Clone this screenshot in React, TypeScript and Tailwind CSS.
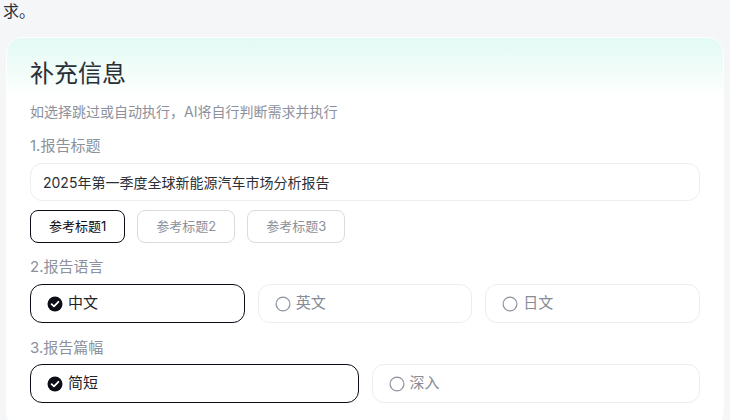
import { useState } from 'react'

const FONT = "font-['Inter','Noto_Sans_CJK_SC',sans-serif]"

const titleOptions = ['参考标题1', '参考标题2', '参考标题3']
const langOptions = ['中文', '英文', '日文']
const lengthOptions = ['简短', '深入']

function CheckIcon({ checked }: { checked: boolean }) {
  if (checked) {
    return (
      <svg width="16" height="16" viewBox="0 0 16 16" className="shrink-0">
        <circle cx="8" cy="8" r="7.5" fill="#0b0d17" />
        <path d="M4.6 8.2 L7 10.4 L11.4 5.8" fill="none" stroke="#fff" strokeWidth="1.8" strokeLinecap="round" strokeLinejoin="round" />
      </svg>
    )
  }
  return (
    <svg width="16" height="16" viewBox="0 0 16 16" className="shrink-0">
      <circle cx="8" cy="8" r="6.9" fill="none" stroke="#8d929e" strokeWidth="1.2" />
    </svg>
  )
}

function OptionRow({ items, value, onChange }: { items: string[]; value: string; onChange: (v: string) => void }) {
  return (
    <div className="flex gap-[13px]">
      {items.map((item) => {
        const active = item === value
        return (
          <button
            key={item}
            onClick={() => onChange(item)}
            className={`flex-1 h-[39px] flex items-center gap-[5px] pl-[16px] rounded-[12px] border text-[15px] ${
              active ? 'border-[#0b0d17] text-[#1f2329]' : 'border-[#ebedf0] text-[#868b96]'
            }`}
          >
            <CheckIcon checked={active} />
            {item}
          </button>
        )
      })}
    </div>
  )
}

export default function App() {
  const [title, setTitle] = useState('参考标题1')
  const [lang, setLang] = useState('中文')
  const [len, setLen] = useState('简短')

  return (
    <div className={`min-h-[420px] bg-[#f5f6f8] ${FONT}`}>
      {/* tail of the previous message */}
      <div className="pl-[3px] text-[16px] leading-[22px] text-[#2b2f36]">求。</div>

      <div className="mt-[15px] ml-[6px] mr-[6px] rounded-[16px] border border-white bg-[linear-gradient(180deg,#e3faf4_0px,#f3fdfa_36px,#ffffff_58px)] px-[23px] pt-[20px] pb-6">
        <h2 className="text-[24px] leading-[32px] text-[#2b2f36]">补充信息</h2>
        <p className="mt-[12px] text-[14px] leading-[20px] text-[#8c919c]">如选择跳过或自动执行，AI将自行判断需求并执行</p>

        {/* 1. title */}
        <div className="mt-[14px] text-[15px] leading-[20px] text-[#8c919c]">1.报告标题</div>
        <div className="mt-[7px] h-[38px] flex items-center px-[12px] rounded-[12px] border border-[#ebedf0] text-[14px] text-[#2b2f36]">
          2025年第一季度全球新能源汽车市场分析报告
        </div>
        <div className="mt-[9px] flex gap-[12px]">
          {titleOptions.map((t) => (
            <button
              key={t}
              onClick={() => setTitle(t)}
              className={`h-[33px] px-[18px] rounded-[8px] border text-[13px] ${
                title === t ? 'border-[#0b0d17] text-[#0b0d17]' : 'border-[#d9dbe0] text-[#8c919c]'
              }`}
            >
              {t}
            </button>
          ))}
        </div>

        {/* 2. language */}
        <div className="mt-[14px] text-[15px] leading-[20px] text-[#8c919c]">2.报告语言</div>
        <div className="mt-[7px]">
          <OptionRow items={langOptions} value={lang} onChange={setLang} />
        </div>

        {/* 3. length */}
        <div className="mt-[15px] text-[15px] leading-[20px] text-[#8c919c]">3.报告篇幅</div>
        <div className="mt-[6px]">
          <OptionRow items={lengthOptions} value={len} onChange={setLen} />
        </div>
      </div>
    </div>
  )
}
